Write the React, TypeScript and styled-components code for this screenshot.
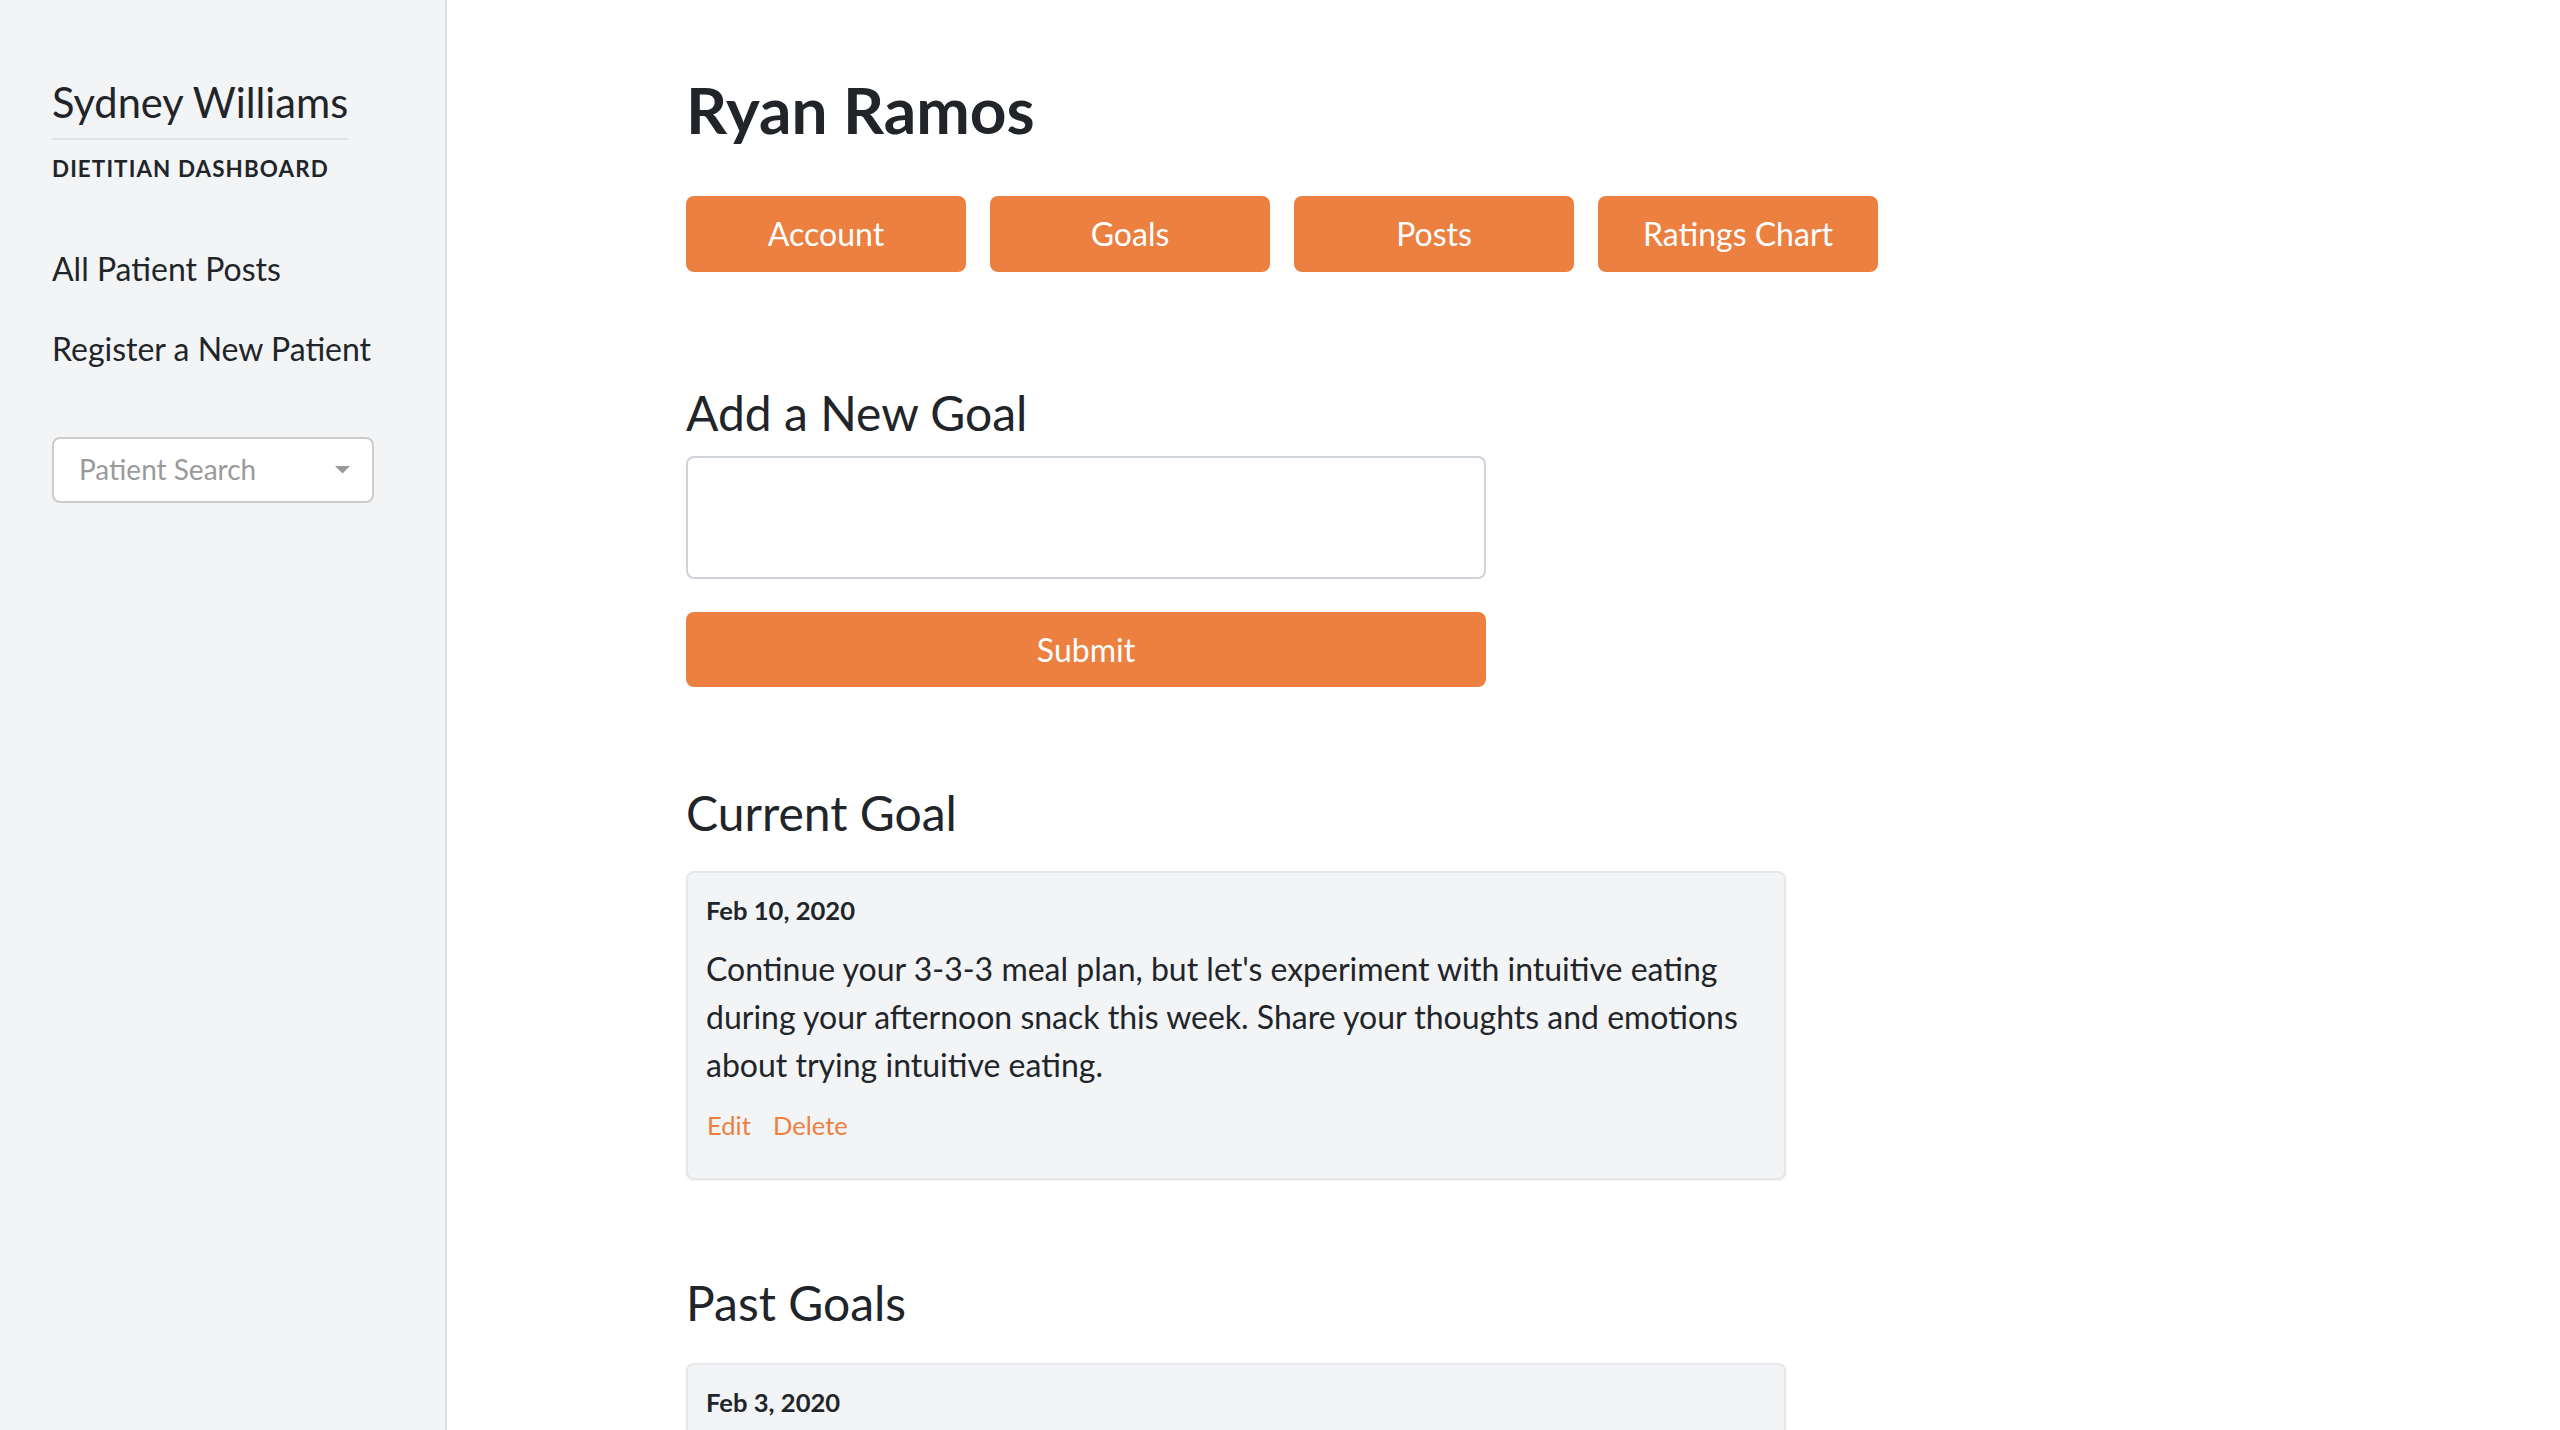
import React from "react";
import styled, { createGlobalStyle } from "styled-components";

const ORANGE = "#ec8040";
const TEXT = "#212529";

const GlobalStyle = createGlobalStyle`
  * { box-sizing: border-box; }
  html, body { margin: 0; padding: 0; background: #ffffff; }
  body {
    font-family: Lato, "Noto Sans", "Liberation Sans", sans-serif;
    color: ${TEXT};
  }
`;

const Layout = styled.div`
  display: flex;
  min-height: 100vh;
  width: 100%;
`;

const Sidebar = styled.aside`
  flex: 0 0 447px;
  width: 447px;
  min-height: 100vh;
  background: #f3f4f6;
  border-right: 2px solid #dedfe2;
  padding: 78px 0 0 52px;
  display: flex;
  flex-direction: column;
  align-items: flex-start;
`;

const Brand = styled.div`
  display: inline-block;
  font-size: 41.6px;
  line-height: 1.2;
  font-weight: 400;
  padding-bottom: 10px;
  border-bottom: 2px solid #e1e2e7;
`;

const Subtitle = styled.div`
  margin-top: 16px;
  font-size: 22.4px;
  line-height: 1.2;
  font-weight: 700;
  letter-spacing: 1.1px;
  text-transform: uppercase;
`;

const Nav = styled.nav`
  margin-top: 62px;
  display: flex;
  flex-direction: column;
  gap: 32px;
`;

const NavLink = styled.a`
  font-size: 32px;
  line-height: 48px;
  color: ${TEXT};
  text-decoration: none;
`;

const Select = styled.div`
  margin-top: 64px;
  width: 322px;
  height: 66px;
  background: #ffffff;
  border: 2px solid #cccccc;
  border-radius: 8px;
  display: flex;
  align-items: center;
  justify-content: space-between;
  padding: 0 22px 0 25px;
`;

const Placeholder = styled.span`
  font-size: 28px;
  line-height: 1.2;
  color: #9a9a9a;
`;

const Main = styled.main`
  flex: 1;
  padding: 72px 0 0 239px;
`;

const Title = styled.h1`
  margin: 0 0 47px;
  font-size: 64px;
  line-height: 1.2;
  font-weight: 700;
`;

const TabRow = styled.div`
  display: flex;
  gap: 24px;
`;

const OrangeButton = styled.button<{ $width: number; $height: number }>`
  width: ${(p) => p.$width}px;
  height: ${(p) => p.$height}px;
  background: ${ORANGE};
  color: #ffffff;
  border: none;
  border-radius: 8px;
  font-family: inherit;
  font-size: 32px;
  line-height: 48px;
  padding: 0;
  display: flex;
  align-items: center;
  justify-content: center;
  cursor: pointer;
`;

const SectionTitle = styled.h2<{ $top: number; $bottom: number }>`
  margin: ${(p) => p.$top}px 0 ${(p) => p.$bottom}px;
  font-size: 48px;
  line-height: 1.2;
  font-weight: 400;
`;

const GoalInput = styled.textarea`
  display: block;
  width: 800px;
  height: 123px;
  border: 2px solid #ced4da;
  border-radius: 8px;
  background: #ffffff;
  resize: none;
  margin: 0 0 33px;
  font-family: inherit;
  font-size: 32px;
  padding: 12px 24px;
`;

const Card = styled.div`
  width: 1100px;
  background: #f3f4f6;
  border: 2px solid #e6e7ea;
  border-radius: 8px;
  box-shadow: 0 1px 2px rgba(0, 0, 0, 0.06);
  padding: 18px 19px 33px 18px;
`;

const CardDate = styled.div`
  font-size: 25.6px;
  line-height: 38.4px;
  font-weight: 700;
  margin-bottom: 16px;
`;

const CardBody = styled.p`
  margin: 0 0 17px;
  font-size: 32px;
  line-height: 48px;
`;

const Actions = styled.div`
  display: flex;
  gap: 22px;
  padding-left: 1px;
`;

const ActionLink = styled.a`
  font-size: 25.6px;
  line-height: 38.4px;
  color: ${ORANGE};
  text-decoration: none;
  cursor: pointer;
`;

const Caret = () => (
  <svg width="15" height="8" viewBox="0 0 15 8" aria-hidden="true">
    <path d="M0 0 L15 0 L7.5 7.5 Z" fill="#999999" />
  </svg>
);

const GoalCard = ({ date, text }: { date: string; text: string }) => (
  <Card>
    <CardDate>{date}</CardDate>
    <CardBody>{text}</CardBody>
    <Actions>
      <ActionLink>Edit</ActionLink>
      <ActionLink>Delete</ActionLink>
    </Actions>
  </Card>
);

export default function App() {
  return (
    <>
      <GlobalStyle />
      <Layout>
        <Sidebar>
          <Brand>Sydney Williams</Brand>
          <Subtitle>Dietitian Dashboard</Subtitle>
          <Nav>
            <NavLink href="#">All Patient Posts</NavLink>
            <NavLink href="#">Register a New Patient</NavLink>
          </Nav>
          <Select>
            <Placeholder>Patient Search</Placeholder>
            <Caret />
          </Select>
        </Sidebar>
        <Main>
          <Title>Ryan Ramos</Title>
          <TabRow>
            {["Account", "Goals", "Posts", "Ratings Chart"].map((t) => (
              <OrangeButton key={t} $width={280} $height={76}>
                {t}
              </OrangeButton>
            ))}
          </TabRow>
          <SectionTitle $top={112} $bottom={15}>Add a New Goal</SectionTitle>
          <GoalInput />
          <OrangeButton $width={800} $height={75}>Submit</OrangeButton>
          <SectionTitle $top={97} $bottom={29}>Current Goal</SectionTitle>
          <GoalCard
            date="Feb 10, 2020"
            text="Continue your 3-3-3 meal plan, but let's experiment with intuitive eating during your afternoon snack this week. Share your thoughts and emotions about trying intuitive eating."
          />
          <SectionTitle $top={94} $bottom={32}>Past Goals</SectionTitle>
          <GoalCard
            date="Feb 3, 2020"
            text="Follow the 3-3-3 meal plan: three meals and three snacks, no more than three hours apart. Write down how you feel before and after each meal."
          />
        </Main>
      </Layout>
    </>
  );
}
